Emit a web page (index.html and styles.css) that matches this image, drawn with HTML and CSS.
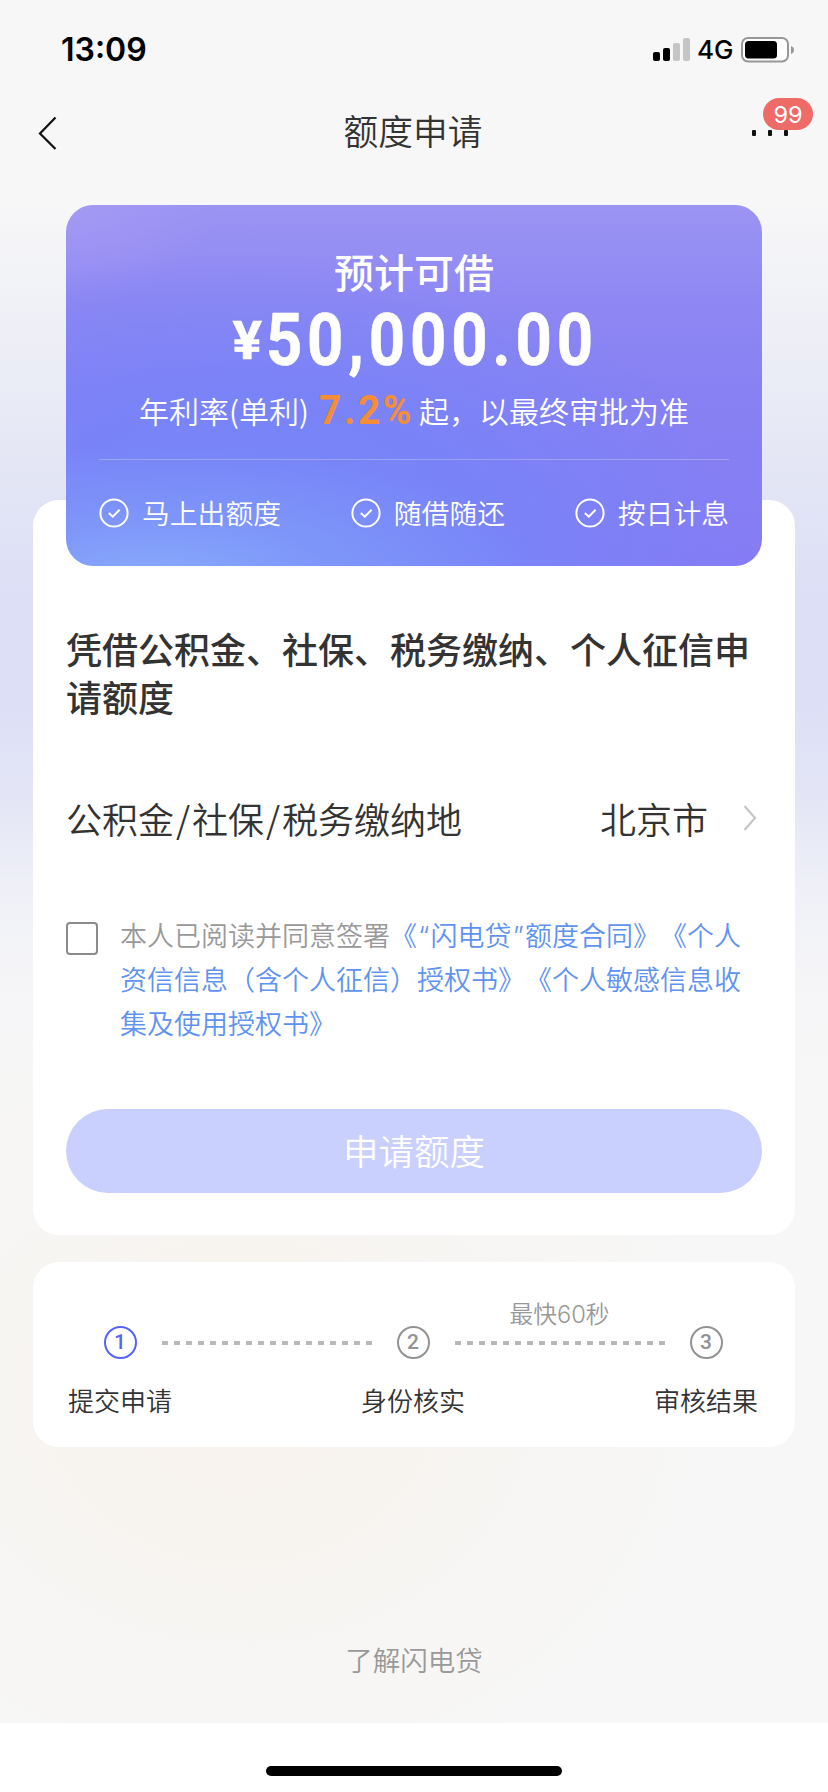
FILE: index.html
```html
<!DOCTYPE html>
<html lang="zh-CN">
<head>
<meta charset="utf-8">
<title>额度申请</title>
<link rel="stylesheet" href="styles.css">
</head>
<body>
<div class="screen">
  <header class="status">
    <span class="time">13:09</span>
    <div class="status-right">
      <svg class="signal" width="38" height="24" viewBox="0 0 38 24"><rect x="0" y="14" width="7" height="9" rx="2"/><rect x="10" y="10" width="7" height="13" rx="2"/><g fill="#c5c5c5"><rect x="20" y="5" width="7" height="18" rx="2"/><rect x="30" y="0" width="7" height="23" rx="2"/></g></svg>
      <span class="net">4G</span>
      <svg class="battery" width="54" height="26" viewBox="0 0 54 26"><rect x="1" y="1" width="46" height="23.500" rx="6" fill="#fdfdfd" stroke="#979797" stroke-width="2"/><rect x="4" y="4" width="32" height="17.500" rx="3.500"/><path d="M50 9v8c2-.8 3-2.200 3-4s-1-3.200-3-4z" fill="#979797"/></svg>
    </div>
  </header>
  <nav class="nav">
    <svg class="back" width="20" height="36" viewBox="0 0 20 36"><path d="M17.500 2.500 2 18.500l15.500 15.500" fill="none" stroke="#111" stroke-width="2.200"/></svg>
    <h1 class="title">额度申请</h1>
    <div class="more"><i></i><i></i><i></i><span class="badge">99</span></div>
  </nav>
  <main class="main">
    <section class="hero">
      <h2 class="hero-title">预计可借</h2>
      <div class="amount"><span class="amount-in"><span class="yen">¥</span>50,000.00</span></div>
      <div class="rate"><span>年利率(单利)</span><b class="pct">7.2%</b><span>起，以最终审批为准</span></div>
      <div class="features">
        <span class="feat"><svg class="check" viewBox="0 0 30 30"><circle cx="15" cy="15" r="13.600"/><path d="m9.800 15 4 3.700 6.800-7"/></svg>马上出额度</span>
        <span class="feat"><svg class="check" viewBox="0 0 30 30"><circle cx="15" cy="15" r="13.600"/><path d="m9.800 15 4 3.700 6.800-7"/></svg>随借随还</span>
        <span class="feat"><svg class="check" viewBox="0 0 30 30"><circle cx="15" cy="15" r="13.600"/><path d="m9.800 15 4 3.700 6.800-7"/></svg>按日计息</span>
      </div>
    </section>
    <section class="card form">
      <h3 class="headline">凭借公积金、社保、税务缴纳、个人征信申请额度</h3>
      <div class="row">
        <span>公积金<span class="slash">/</span>社保<span class="slash">/</span>税务缴纳地</span>
        <span class="city">北京市</span>
        <svg class="chev" width="14" height="28" viewBox="0 0 14 28"><path d="m1.500 2 10.500 12-10.500 12" fill="none" stroke="#c6c6c6" stroke-width="2.200"/></svg>
      </div>
      <div class="agree">
        <span class="box"></span>
        <p class="terms">本人已阅读并同意签署<a class="link">《<span class="q">“</span>闪电贷<span class="q">”</span>额度合同》《个人<br>资信信息（含个人征信）授权书》《个人敏感信息收<br>集及使用授权书》</a></p>
      </div>
      <div class="button">申请额度</div>
    </section>
    <section class="card steps">
      <div class="step on"><span class="num">1</span><span class="label">提交申请</span></div>
      <div class="link-line"><span class="dash"></span></div>
      <div class="step"><span class="num">2</span><span class="label">身份核实</span></div>
      <div class="link-line"><span class="tip">最快<span class="tip-n">60</span>秒</span><span class="dash"></span></div>
      <div class="step"><span class="num">3</span><span class="label">审核结果</span></div>
    </section>
    <div class="learn">了解闪电贷</div>
  </main>
  <footer class="bottom"><span class="home"></span></footer>
</div>
</body>
</html>
```

FILE: styles.css
```css
* { box-sizing: border-box; }
body { margin: 0; font-family: "Noto Sans CJK SC", sans-serif; font-weight: 350; color: #333; text-spacing-trim: space-all; }
h1, h2, h3, p { margin: 0; font-weight: inherit; }
.screen {
  width: 828px; height: 1792px; overflow: hidden; display: flex; flex-direction: column; white-space: nowrap;
  background:
    radial-gradient(ellipse 500px 420px at 240px 1400px, #f8f2eb, rgba(247,245,242,.6) 60%, rgba(247,247,247,0)),
    linear-gradient(#f7f7f7 0, #f7f7f8 200px, #eeeff6 330px, #e5e7f5 450px, #dcdff6 600px, #dcdff6 700px, #e3e5f6 790px, #f0f1f7 900px, #f6f6f8 1000px, #f7f7f7 1100px);
}
.status { height: 88px; padding: 0 33px 0 61px; display: flex; justify-content: space-between; flex: none; font-family: Inter, sans-serif; color: #000; }
.time { font-size: 32px; font-weight: 600; line-height: 38px; margin-top: 31px; }
.status-right { display: flex; padding-top: 37px; height: 64px; }
.signal { margin-top: 1px; }
.net { font-size: 26px; font-weight: 500; line-height: 26px; margin-left: 6px; width: 44px; }
.nav { height: 90px; flex: none; display: grid; grid-template-columns: 1fr auto 1fr; align-items: center; padding: 0 40px 0 38px; }
.title { font-size: 34.700px; line-height: 50px; padding-bottom: 6px; }
.more { justify-self: end; display: flex; gap: 12px; position: relative; }
.more i { width: 4px; height: 6px; background: #111; border-radius: 1px; }
.badge { position: absolute; left: 11px; top: -32px; width: 50px; height: 32px; border-radius: 16px; background: #ee6b67; color: #fff; font: 400 23.500px/33px Inter, sans-serif; text-align: center; }
.main { flex: 1; padding: 27px 33px 0; display: flex; flex-direction: column; }
.hero {
  height: 361px; flex: none; margin: 0 33px -66px; border-radius: 27px; position: relative; z-index: 1; color: #fff; padding: 36px 33px 0;
  background:
    radial-gradient(ellipse 400px 130px at 12% 103%, #88a9fb, rgba(130,160,250,.6) 45%, rgba(125,145,250,0)),
    radial-gradient(ellipse 500px 300px at 26% 96%, rgba(118,136,248,1), rgba(118,132,248,.8) 50%, rgba(120,130,248,0)),
    radial-gradient(ellipse 150px 90px at 0 0, rgba(166,155,243,.8), rgba(160,148,243,0)),
    linear-gradient(#9b94f3, #8f88f3 26%, #8781f3 50%, #857cf4 100%);
}
.hero-title { font-size: 40px; line-height: 60px; font-weight: 500; text-align: center; }
.amount { height: 78px; display: flex; justify-content: center; }
.amount-in { font: 700 72px/80px Roboto, sans-serif; letter-spacing: 5.500px; transform: scaleX(.88); margin-left: 4px; -webkit-text-stroke: .6px #fff; }
.yen { display: inline-block; font-size: 53px; line-height: 60px; letter-spacing: 0; margin-right: 7px; transform: translateY(-6px) scaleX(1.180); }
.rate { height: 81px; display: flex; justify-content: center; font-size: 30px; line-height: 63px; border-bottom: 1px solid rgba(255,255,255,.25); }
.pct { font: 700 41px/62px Roboto, sans-serif; color: #f48d35; letter-spacing: 3px; width: 98px; margin: 0 2px 0 10px; transform: scaleX(.94); transform-origin: left; }
.features { display: flex; justify-content: space-between; padding-top: 32px; line-height: 40px; font-size: 27.800px; }
.feat { display: flex; align-items: center; gap: 13px; }
.check { width: 30px; height: 30px; fill: none; stroke: #fff; stroke-width: 2; margin-top: 2px; }
.card { background: #fff; border-radius: 26px; flex: none; }
.form { height: 735px; padding: 124px 33px 0; }
.headline { font-size: 36px; line-height: 48px; font-weight: 500; white-space: normal; width: 690px; }
.row { display: flex; align-items: center; font-size: 36px; line-height: 52px; margin-top: 72px; }
.slash { display: inline-block; width: 18px; text-align: center; }
.city { margin-left: auto; }
.chev { margin: 0 5px 0 35px; }
.agree { display: flex; margin-top: 69px; }
.box { width: 32px; height: 33px; border: 2px solid #8b8b8b; border-radius: 4px; margin: 9px 22px 0 0; flex: none; }
.terms { font-size: 27px; line-height: 44px; color: #999; }
.link { color: #6093ef; }
.q { display: inline-block; width: 13.500px; text-align: center; font-family: Inter, sans-serif; line-height: 20px; }
.button { margin-top: 64px; height: 84px; border-radius: 42px; background: #cad0fd; color: #fff; font-size: 35.500px; line-height: 82px; text-align: center; }
.steps { height: 185px; margin-top: 27px; padding: 64px 37px 0 35px; display: flex; }
.step { width: 104px; flex: none; display: flex; flex-direction: column; align-items: center; color: #929292; }
.num { width: 33px; height: 33px; border: 2.500px solid; border-radius: 50%; font: 500 21px/29px Roboto, sans-serif; text-align: center; }
.on { color: #5364f4; }
.label { font-size: 26px; line-height: 40px; color: #333; margin-top: 21px; }
.link-line { flex: 1; min-width: 0; position: relative; padding: 15px 0 0; display: flex; justify-content: center; align-items: flex-start; }
.dash { width: 210px; flex: none; height: 4px; background: repeating-linear-gradient(90deg, #b9b9b9 0 6px, transparent 6px 12px); }
.tip { position: absolute; top: -31px; left: 0; right: 0; text-align: center; font-size: 23.700px; line-height: 36px; color: #999; }
.tip-n { font-family: Inter, sans-serif; }
.learn { text-align: center; font-size: 27.500px; line-height: 40px; color: #999; margin-top: 192px; }
.bottom { height: 69px; flex: none; background: #fff; display: flex; justify-content: center; padding-top: 43px; }
.home { width: 296px; height: 10px; border-radius: 5px; background: #000; }
```
